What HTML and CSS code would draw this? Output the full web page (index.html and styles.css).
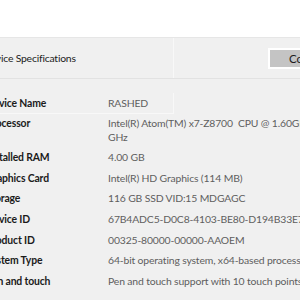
FILE: index.html
```html
<!DOCTYPE html>
<html>
<head>
<meta charset="utf-8">
<link rel="stylesheet" href="styles.css">
</head>
<body>
<div class="top"></div>
<div class="panel">
  <div class="header">
    <div class="title">Device Specifications</div>
    <div class="divider"></div>
    <div class="copy-wrap"><button class="copy">Copy</button></div>
  </div>
  <div class="specs">
    <div class="row focus"><div class="label">Device Name</div><div class="value">RASHED</div></div>
    <div class="row"><div class="label">Processor</div><div class="value">Intel(R) Atom(TM) x7-Z8700&nbsp; CPU @ 1.60GHz&nbsp;&nbsp; 1.60 GHz</div></div>
    <div class="row"><div class="label">Installed RAM</div><div class="value">4.00 GB</div></div>
    <div class="row"><div class="label">Graphics Card</div><div class="value">Intel(R) HD Graphics (114 MB)</div></div>
    <div class="row"><div class="label">Storage</div><div class="value">116 GB SSD VID:15 MDGAGC</div></div>
    <div class="row"><div class="label">Device ID</div><div class="value">67B4ADC5-D0C8-4103-BE80-D194B33E7D2B</div></div>
    <div class="row"><div class="label">Product ID</div><div class="value">00325-80000-00000-AAOEM</div></div>
    <div class="row"><div class="label">System Type</div><div class="value">64-bit operating system, x64-based processor</div></div>
    <div class="row"><div class="label">Pen and touch</div><div class="value">Pen and touch support with 10 touch points</div></div>
  </div>
</div>
</body>
</html>
```
FILE: styles.css
```css
html, body {
  margin: 0;
  padding: 0;
  width: 300px;
  height: 300px;
  overflow: hidden;
  background: #f0f0f0;
  font-family: Lato, "Noto Sans", sans-serif;
}
.top {
  height: 37px;
  background: #ffffff;
  border-bottom: 1px solid #e6e6e6;
}
.panel {
  background: #f0f0f0;
}
.header {
  display: flex;
  align-items: center;
  height: 40px;
  border-bottom: 1px solid #e2e2e2;
}
.title {
  margin-left: -17px;
  width: 190px;
  flex: none;
  font-size: 10.4px;
  letter-spacing: -0.2px;
  color: #1b1b1b;
  white-space: nowrap;
  overflow: hidden;
}
.divider {
  width: 1px;
  align-self: stretch;
  background: #f8f8f8;
}
.copy-wrap {
  flex: 1;
  display: flex;
  justify-content: flex-end;
  overflow: hidden;
}
.copy {
  margin-right: -40px;
  width: 72px;
  height: 21px;
  border: 2px solid #ffffff;
  background: #c4c4c4;
  font-family: inherit;
  font-size: 11.5px;
  color: #1b1b1b;
  text-align: left;
  padding: 0 0 0 19px;
  line-height: 15px;
}
.specs {
  padding-top: 14px;
}
.row {
  display: flex;
  padding: 3.5px 0;
  font-size: 10.4px;
  letter-spacing: -0.15px;
  line-height: 13.6px;
}
.row.focus {
  box-shadow: inset -1px -1px 0 0 #f8f8f8;
  width: 174px;
}
.label {
  margin-left: -14px;
  width: 122px;
  flex: none;
  font-weight: 700;
  color: #1b1b1b;
  white-space: nowrap;
  overflow: hidden;
}
.value {
  flex: none;
  width: 237px;
  color: #5e5e5e;
}
.row.focus .value {
  width: auto;
}
```
